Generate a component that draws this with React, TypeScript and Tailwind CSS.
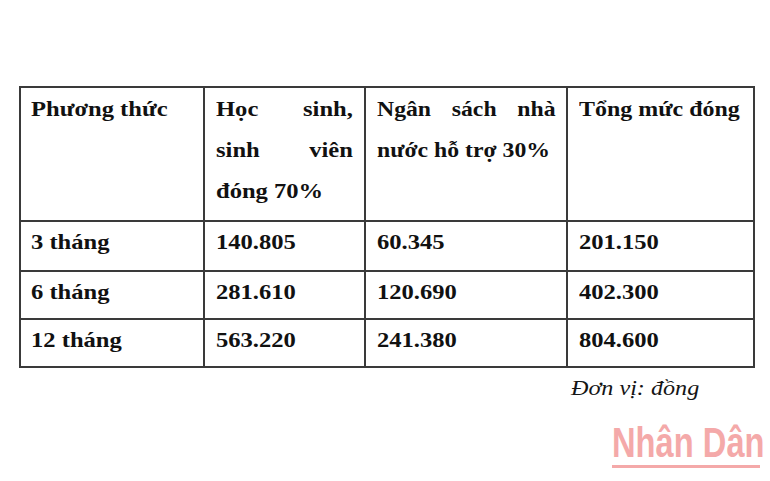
import React from "react";

const rows = [
  ["3 tháng", "140.805", "60.345", "201.150"],
  ["6 tháng", "281.610", "120.690", "402.300"],
  ["12 tháng", "563.220", "241.380", "804.600"],
];

export default function App() {
  const serif = { fontFamily: '"Liberation Serif", "Times New Roman", serif' };
  const cell = "border-2 border-[#3a3a3a] align-top";
  const stretch = "origin-top-left scale-x-[1.17]";
  return (
    <div className="w-[770px] h-[481px] bg-white overflow-hidden relative" style={serif}>
      <div className="pt-[86px] pl-[19px]">
        <table className="table-fixed border-collapse w-[734px] text-[21px] font-bold text-[#111]">
          <colgroup>
            <col className="w-[184px]" />
            <col className="w-[161px]" />
            <col className="w-[202px]" />
            <col className="w-[187px]" />
          </colgroup>
          <thead>
            <tr className="h-[134px]">
              <th className={`${cell} pl-[10px] pt-[1px] text-left font-bold leading-[41px]`}>
                <div className={`w-[140px] whitespace-nowrap ${stretch}`}>Phương thức</div>
              </th>
              <th className={`${cell} px-[11px] pt-[1px] text-justify font-bold leading-[41px]`}>
                <div className={`w-[117px] ${stretch}`}>Học sinh, sinh viên đóng 70%</div>
              </th>
              <th className={`${cell} px-[11px] pt-[1px] text-justify font-bold leading-[41px]`}>
                <div className="w-[158px] origin-top-left scale-x-[1.13]">Ngân sách nhà nước hỗ trợ 30%</div>
              </th>
              <th className={`${cell} px-[11px] pt-[1px] text-left font-bold leading-[41px]`}>
                <div className="w-[148px] whitespace-nowrap origin-top-left scale-x-[1.14]">Tổng mức đóng</div>
              </th>
            </tr>
          </thead>
          <tbody>
            {rows.map((r, i) => (
              <tr key={i} className={i === 0 ? "h-[50px]" : "h-[48px]"}>
                {r.map((c, j) => (
                  <td key={j} className={`${cell} ${j === 0 ? "pl-[10px]" : "pl-[11px]"} pt-0 leading-[40px]`}>
                    <div className={`whitespace-nowrap ${stretch}`}>{c}</div>
                  </td>
                ))}
              </tr>
            ))}
          </tbody>
        </table>
      </div>
      <div className="pl-[571px] pt-[5px] text-[21px] italic text-[#151515] leading-[30px]">
        <div className="origin-top-left scale-x-[1.15] whitespace-nowrap">Đơn vị: đồng</div>
      </div>
      <div className="absolute left-[612px] top-[418px] w-[150px]">
        <div
          className="text-[43px] font-bold text-[#f4a9a9] leading-[48px] origin-left scale-x-[0.76] whitespace-nowrap"
          style={{ fontFamily: '"Liberation Sans", Arial, sans-serif' }}
        >
          Nhân Dân
        </div>
        <div className="h-[3px] w-[148px] bg-[#f4a9a9] -mt-[1px]" />
      </div>
    </div>
  );
}
